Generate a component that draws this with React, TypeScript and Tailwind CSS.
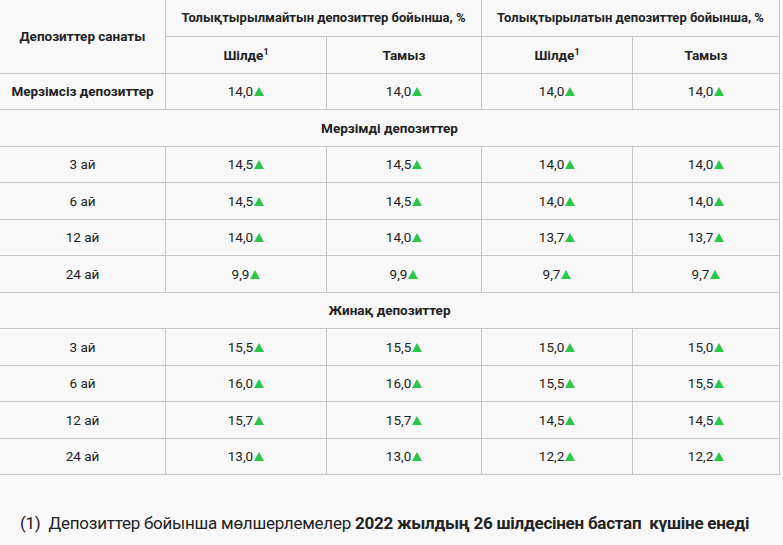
import React from "react"

const Up = () => (
  <svg width="10" height="9" viewBox="0 0 10 9" className="inline-block ml-[1px] -mt-[2px] align-middle">
    <polygon points="5,0 10,9 0,9" fill="#2cc64a" />
  </svg>
)

const Val = ({ v }: { v: string }) => (
  <span>
    {v}
    <Up />
  </span>
)

const sections = [
  {
    title: "Мерзімді депозиттер",
    rows: [
      ["3 ай", "14,5", "14,5", "14,0", "14,0"],
      ["6 ай", "14,5", "14,5", "14,0", "14,0"],
      ["12 ай", "14,0", "14,0", "13,7", "13,7"],
      ["24 ай", "9,9", "9,9", "9,7", "9,7"],
    ],
  },
  {
    title: "Жинақ депозиттер",
    rows: [
      ["3 ай", "15,5", "15,5", "15,0", "15,0"],
      ["6 ай", "16,0", "16,0", "15,5", "15,5"],
      ["12 ай", "15,7", "15,7", "14,5", "14,5"],
      ["24 ай", "13,0", "13,0", "12,2", "12,2"],
    ],
  },
]

const cell = "border border-[#c6c6c6] text-center align-middle h-[36.5px] p-0"

export default function App() {
  return (
    <div className="w-[783px] h-[545px] bg-[#f8f8f8] overflow-hidden text-[#222] font-['Roboto',sans-serif]">
      <table className="border-collapse table-fixed w-[780px] -ml-[1px] text-[13.5px] border-t-0">
        <colgroup>
          <col className="w-[166px]" />
          <col className="w-[161px]" />
          <col className="w-[155px]" />
          <col className="w-[151px]" />
          <col className="w-[147px]" />
        </colgroup>
        <thead>
          <tr className="font-bold">
            <th rowSpan={2} className={`${cell} border-t-0`}>
              Депозиттер санаты
            </th>
            <th colSpan={2} className={`${cell} border-t-0 text-[13px]`}>
              Толықтырылмайтын депозиттер бойынша, %
            </th>
            <th colSpan={2} className={`${cell} border-t-0 text-[13px]`}>
              Толықтырылатын депозиттер бойынша, %
            </th>
          </tr>
          <tr className="font-bold">
            <th className={cell}>
              Шілде<sup className="text-[9px] -top-[5px]">1</sup>
            </th>
            <th className={cell}>Тамыз</th>
            <th className={cell}>
              Шілде<sup className="text-[9px] -top-[5px]">1</sup>
            </th>
            <th className={cell}>Тамыз</th>
          </tr>
        </thead>
        <tbody>
          <tr>
            <td className={`${cell} font-bold`}>Мерзімсіз депозиттер</td>
            <td className={cell}>
              <Val v="14,0" />
            </td>
            <td className={cell}>
              <Val v="14,0" />
            </td>
            <td className={cell}>
              <Val v="14,0" />
            </td>
            <td className={cell}>
              <Val v="14,0" />
            </td>
          </tr>
          {sections.map((s) => (
            <React.Fragment key={s.title}>
              <tr>
                <td colSpan={5} className={`${cell} font-bold`}>
                  {s.title}
                </td>
              </tr>
              {s.rows.map((r, i) => (
                <tr key={i}>
                  <td className={cell}>{r[0]}</td>
                  {r.slice(1).map((v, j) => (
                    <td key={j} className={cell}>
                      <Val v={v} />
                    </td>
                  ))}
                </tr>
              ))}
            </React.Fragment>
          ))}
        </tbody>
      </table>
      <p className="mt-[36px] pl-[20px] text-[17px] tracking-[-0.25px] text-[#222] whitespace-nowrap">
        (1)&nbsp; Депозиттер бойынша мөлшерлемелер{" "}
        <b>2022 жылдың 26 шілдесінен бастап&nbsp; күшіне енеді</b>
      </p>
    </div>
  )
}
